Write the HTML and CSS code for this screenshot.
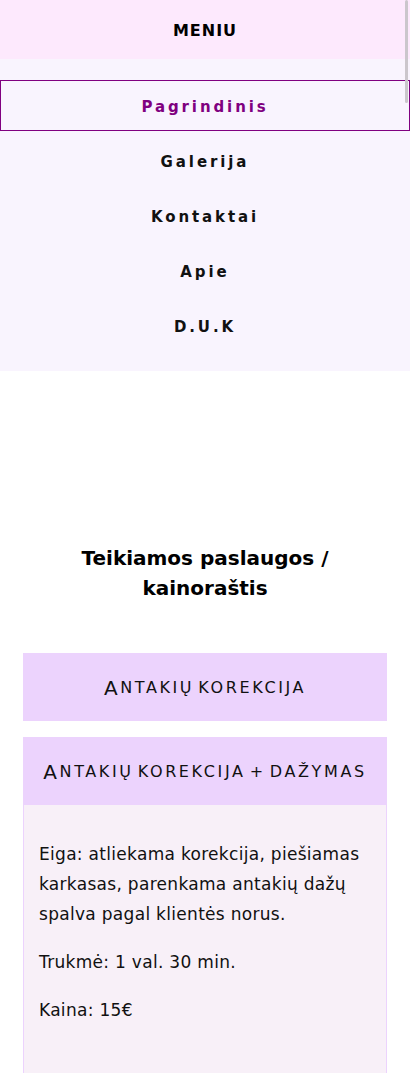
FILE: index.html
```html
<!DOCTYPE html>
<html lang="lt">
<head>
<meta charset="utf-8">
<title>Paslaugos</title>
<link rel="stylesheet" href="styles.css">
</head>
<body>
<header class="menu-head">MENIU</header>
<nav class="menu">
  <a class="menu-item active" href="#">Pagrindinis</a>
  <a class="menu-item" href="#">Galerija</a>
  <a class="menu-item" href="#">Kontaktai</a>
  <a class="menu-item" href="#">Apie</a>
  <a class="menu-item" href="#">D.U.K</a>
</nav>
<main class="services">
  <h1 class="title">Teikiamos paslaugos /<br>kainoraštis</h1>
  <div class="service">
    <div class="service-head">A<span class="sc">ntakių korekcija</span></div>
  </div>
  <div class="service">
    <div class="service-head">A<span class="sc">ntakių korekcija + dažymas</span></div>
    <div class="service-body">
      <p>Eiga: atliekama korekcija, piešiamas karkasas, parenkama antakių dažų spalva pagal klientės norus.</p>
      <p>Trukmė: 1 val. 30 min.</p>
      <p>Kaina: 15€</p>
    </div>
  </div>
</main>
<div class="scroll-thumb"></div>
</body>
</html>
```
FILE: styles.css
```css
* { box-sizing: border-box; }
html, body { margin: 0; padding: 0; }
body {
  font-family: "DejaVu Sans", "Open Sans", sans-serif;
  color: #000;
  background: #fff;
  width: 410px;
  overflow: hidden;
}
.menu-head {
  height: 59px;
  padding-top: 2px;
  background: #fde9fd;
  display: flex;
  align-items: center;
  justify-content: center;
  font-weight: 700;
  font-size: 16px;
  letter-spacing: 1px;
}
.menu {
  background: #f9f4fe;
  padding: 21px 0 20px;
  display: flex;
  flex-direction: column;
  gap: 4px;
}
.menu-item {
  height: 51px;
  padding-top: 2px;
  display: flex;
  align-items: center;
  justify-content: center;
  text-decoration: none;
  color: #111;
  font-weight: 700;
  font-size: 15px;
  letter-spacing: 2.9px;
  border: 1px solid transparent;
}
.menu-item.active {
  color: #800080;
  border-color: #800080;
}
.services {
  padding: 172px 23px 0;
}
.title {
  margin: 0 0 50px;
  text-align: center;
  font-size: 20px;
  line-height: 30px;
  font-weight: 700;
}
.service {
  margin-bottom: 16px;
}
.service-head {
  height: 68px;
  padding-top: 1px;
  background: #ecd3fd;
  display: flex;
  align-items: center;
  justify-content: center;
  font-size: 20px;
  font-weight: 400;
  letter-spacing: 2.6px;
  word-spacing: -3.5px;
  color: #111;
}
.sc {
  text-transform: uppercase;
  font-size: 16px;
}
.service-body {
  background: #f8f0f8;
  border: 1px solid #ecd3fd;
  border-top: none;
  padding: 16px 15px 40px;
  min-height: 300px;
}
.service-body p {
  margin: 18px 0;
  font-size: 17px;
  letter-spacing: 0.3px;
  line-height: 30px;
  color: #111;
}
.scroll-thumb {
  position: fixed;
  top: 0;
  right: 2px;
  width: 3px;
  height: 103px;
  background: #cbc6cc;
  border-radius: 2px;
}
```
